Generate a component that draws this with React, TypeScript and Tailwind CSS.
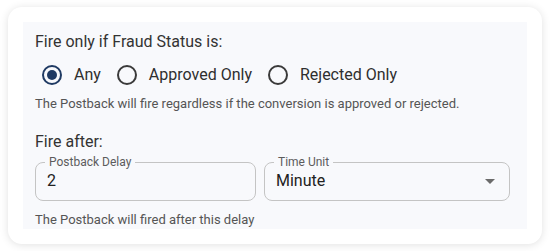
import { useState } from "react";

const options = ["Any", "Approved Only", "Rejected Only"];

const Radio = ({ label, checked, onClick }: { label: string; checked: boolean; onClick: () => void }) => (
  <button type="button" onClick={onClick} className="flex items-center mr-[16px]">
    <span
      className={`flex items-center justify-center w-[20px] h-[20px] rounded-full border-2 ${
        checked ? "border-[#1f3a63]" : "border-[#3a3a3a]"
      }`}
    >
      {checked && <span className="w-[10px] h-[10px] rounded-full bg-[#1f3a63]" />}
    </span>
    <span className="ml-[12px] text-[16px] leading-[24px] text-[#2e2e2e]">{label}</span>
  </button>
);

const Outlined = ({ label, width, children }: { label: string; width: string; children: React.ReactNode }) => (
  <fieldset className={`${width} border border-[#c4c4c4] rounded-[8px] pl-[9px] pr-[12px] pt-0 pb-[7px] m-0`}>
    <legend className="px-[4px] text-[12px] leading-[14px] text-[#5c5c5c]">{label}</legend>
    {children}
  </fieldset>
);

export default function App() {
  const [status, setStatus] = useState("Any");

  return (
    <div className="w-[550px] h-[251px] bg-white pt-[7px] pl-[8px]" style={{ fontFamily: "Roboto, 'Noto Sans', sans-serif" }}>
      <div className="w-[534px] h-[237px] bg-white rounded-[14px] shadow-[0_1px_8px_rgba(0,0,0,0.12)] p-[15px]">
        <div className="h-[207px] bg-[#f8f9fc] pl-[12px] pt-[8px]">
          <div className="text-[16px] leading-[24px] text-[#333]">Fire only if Fraud Status is:</div>
          <div className="flex items-center h-[40px] pl-[7px] pt-[2px]">
            {options.map((o) => (
              <Radio key={o} label={o} checked={status === o} onClick={() => setStatus(o)} />
            ))}
          </div>
          <p className="mt-[2px] text-[13px] leading-[16px] text-[#555]">
            The Postback will fire regardless if the conversion is approved or rejected.
          </p>

          <div className="mt-[18px] text-[16px] leading-[24px] text-[#333]">Fire after:</div>
          <div className="flex gap-[8px] mt-px">
            <Outlined label="Postback Delay" width="w-[221px]">
              <div className="ml-[2px] h-[24px] text-[16px] leading-[24px] text-[#222]">2</div>
            </Outlined>
            <Outlined label="Time Unit" width="w-[246px]">
              <div className="ml-[2px] h-[24px] flex items-center justify-between text-[16px] leading-[24px] text-[#222]">
                <span>Minute</span>
                <svg width="10" height="5" viewBox="0 0 10 5" className="mr-[2px]">
                  <path d="M0 0h10L5 5z" fill="#6b6b6b" />
                </svg>
              </div>
            </Outlined>
          </div>
          <p className="mt-[11px] text-[13px] leading-[16px] text-[#555]">The Postback will fired after this delay</p>
        </div>
      </div>
    </div>
  );
}
